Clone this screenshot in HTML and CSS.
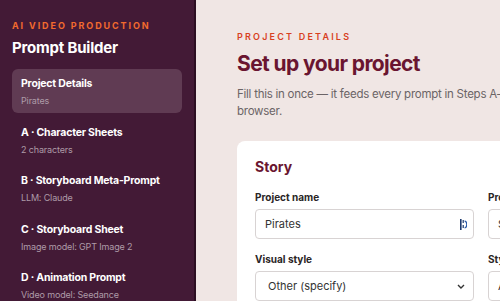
FILE: index.html
```html
<!DOCTYPE html>
<html lang="en">
<head>
<meta charset="utf-8">
<title>Prompt Builder</title>
<link rel="stylesheet" href="styles.css">
</head>
<body>
<div class="app">
  <aside class="sidebar">
    <div class="eyebrow">AI VIDEO PRODUCTION</div>
    <div class="brand">Prompt Builder</div>
    <nav class="nav">
      <a class="nav-item active"><span class="nav-title">Project Details</span><span class="nav-sub">Pirates</span></a>
      <a class="nav-item"><span class="nav-title">A · Character Sheets</span><span class="nav-sub">2 characters</span></a>
      <a class="nav-item"><span class="nav-title">B · Storyboard Meta-Prompt</span><span class="nav-sub">LLM: Claude</span></a>
      <a class="nav-item"><span class="nav-title">C · Storyboard Sheet</span><span class="nav-sub">Image model: GPT Image 2</span></a>
      <a class="nav-item"><span class="nav-title">D · Animation Prompt</span><span class="nav-sub">Video model: Seedance</span></a>
    </nav>
  </aside>
  <main class="main">
    <div class="section-label">PROJECT DETAILS</div>
    <h1 class="title">Set up your project</h1>
    <p class="lead">Fill this in once — it feeds every prompt in Steps A–D. Saved automatically in your browser.</p>
    <section class="card">
      <h2 class="card-title">Story</h2>
      <div class="grid">
        <div class="field">
          <label class="label">Project name</label>
          <div class="input">
            <span class="input-text">Pirates</span>
            <svg class="pm-icon" width="7" height="11" viewBox="0 0 7 11"><rect x="0" y="0" width="1.6" height="11" fill="#1d3a6e"/><rect x="2.6" y="1" width="1.2" height="3" fill="#1d3a6e"/><rect x="2.6" y="6" width="1.2" height="3" fill="#1d3a6e"/><path d="M4.6 2.2 Q6.8 2.2 6.8 5.5 Q6.8 8.8 4.6 8.8" fill="none" stroke="#2a5aa8" stroke-width="1.3"/></svg>
          </div>
        </div>
        <div class="field">
          <label class="label">Project type</label>
          <div class="input"><span class="input-text">Short film</span></div>
        </div>
        <div class="field">
          <label class="label">Visual style</label>
          <div class="input select">
            <span class="input-text">Other (specify)</span>
            <svg class="chev" width="8" height="5" viewBox="0 0 8 5"><path d="M1 1 L4 4 L7 1" fill="none" stroke="#333" stroke-width="1.4"/></svg>
          </div>
        </div>
        <div class="field">
          <label class="label">Style notes</label>
          <div class="input"><span class="input-text">Anime</span></div>
        </div>
      </div>
    </section>
  </main>
</div>
</body>
</html>
```
FILE: styles.css
```css
* { box-sizing: border-box; margin: 0; padding: 0; }
html, body { width: 500px; height: 301px; overflow: hidden; }
body { font-family: Inter, "Noto Sans", sans-serif; background: #f0e6e4; }
.app { display: flex; height: 301px; }
.sidebar {
  width: 196px; flex: none;
  background: #431a36;
  border-right: 2px solid #2c0e22;
  padding: 20px 12px 0 12px;
  color: #fff;
}
.eyebrow {
  font-size: 9px; line-height: 11px; font-weight: 700;
  color: #f26a2e; letter-spacing: 1.9px;
}
.brand {
  font-size: 15px; line-height: 20px; font-weight: 700;
  margin-top: 7px; color: #fff; letter-spacing: -0.2px;
}
.nav { display: flex; flex-direction: column; gap: 4.5px; margin-top: 11px; }
.nav-item {
  display: flex; flex-direction: column;
  padding: 7px 9px 6px 9px; border-radius: 6px; height: 44px;
}
.nav-item.active { background: #603b53; }
.nav-title { font-size: 10.5px; line-height: 15px; font-weight: 700; color: #fff; white-space: nowrap; letter-spacing: -0.2px; }
.nav-sub { font-size: 9px; line-height: 13px; margin-top: 3px; color: #ae9ba8; white-space: nowrap; letter-spacing: -0.15px; }
.main {
  flex: none; width: 560px;
  padding: 31px 0 0 41px;
}
.section-label {
  font-size: 9px; line-height: 12px; font-weight: 600;
  color: #d8401f; letter-spacing: 2.2px;
}
.title {
  font-size: 21px; line-height: 28px; font-weight: 700;
  color: #6a1530; margin-top: 7px; letter-spacing: -0.6px;
}
.lead {
  font-size: 11.5px; line-height: 17px; color: #6b6466;
  margin-top: 7.5px; width: 445px; letter-spacing: -0.25px;
}
.card {
  margin-top: 21.5px; width: 520px;
  background: #fff; border-radius: 8px;
  padding: 17px 18px 20px 18px;
}
.card-title { font-size: 14px; line-height: 18px; font-weight: 700; color: #6a1530; }
.grid {
  display: grid; grid-template-columns: 219px 219px;
  column-gap: 14px; row-gap: 13px; margin-top: 14px;
}
.field { display: flex; flex-direction: column; gap: 5px; }
.label { font-size: 10px; line-height: 14px; font-weight: 700; color: #2a2526; }
.input {
  height: 30px; border: 1px solid #d8d3d3; border-radius: 4px;
  display: flex; align-items: center; justify-content: space-between;
  padding: 0 6px 0 9px; background: #fff;
}
.input-text { font-size: 11px; color: #333; }
.select { padding-left: 12px; padding-right: 8px; }
.pm-icon { display: block; }
.chev { display: block; }
```
